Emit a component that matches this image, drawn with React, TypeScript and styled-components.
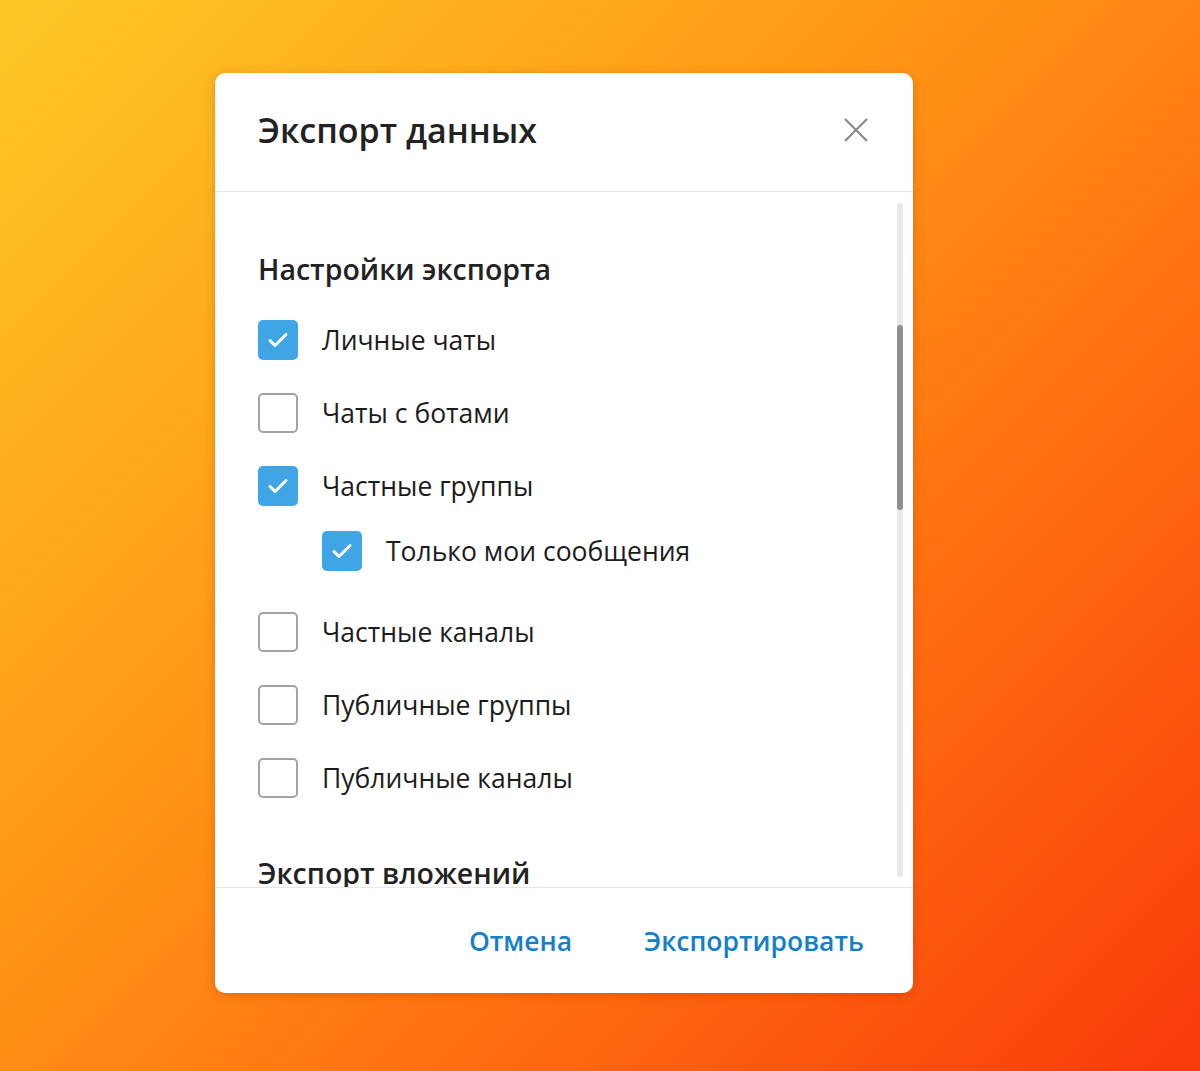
import React from "react";
import styled, { createGlobalStyle } from "styled-components";

const GlobalStyle = createGlobalStyle`
  html, body {
    margin: 0;
    padding: 0;
  }
  body {
    font-family: "Open Sans", "Noto Sans", sans-serif;
    -webkit-font-smoothing: antialiased;
  }
`;

const Page = styled.div`
  width: 1200px;
  height: 1071px;
  box-sizing: border-box;
  padding: 73px 0 0 215px;
  background: linear-gradient(135deg, #fdc826 0%, #ff9a16 38%, #ff7612 62%, #f93a0a 100%);
  overflow: hidden;
`;

const Modal = styled.div`
  width: 698px;
  height: 920px;
  background: #fff;
  border-radius: 10px;
  box-shadow: 0 2px 10px rgba(120, 40, 0, 0.25);
  display: flex;
  flex-direction: column;
  overflow: hidden;
`;

const Header = styled.header`
  height: 119px;
  flex-shrink: 0;
  display: flex;
  align-items: center;
  justify-content: space-between;
  padding: 0 44px 0 43px;
  border-bottom: 1px solid #e6e6e6;
  box-sizing: border-box;
`;

const Title = styled.h1`
  margin: 0 0 4px;
  font-size: 34px;
  font-weight: 600;
  color: #222;
`;

const CloseButton = styled.button`
  background: none;
  border: none;
  padding: 0;
  margin-bottom: 4px;
  width: 26px;
  height: 26px;
  cursor: pointer;
  display: flex;
`;

const Body = styled.div`
  position: relative;
  height: 695px;
  flex-shrink: 0;
  overflow: hidden;
`;

const Content = styled.div`
  padding: 59px 43px 0;
`;

const SectionTitle = styled.h2<{ $top?: number }>`
  margin: ${(p) => p.$top ?? 0}px 0 0;
  font-size: 28.5px;
  line-height: 36px;
  font-weight: 600;
  color: #222;
`;

const List = styled.div`
  margin-top: 33px;
  display: flex;
  flex-direction: column;
`;

const Row = styled.label<{ $indent?: boolean; $gap: number }>`
  display: flex;
  align-items: center;
  gap: 24px;
  height: 40px;
  margin-left: ${(p) => (p.$indent ? 64 : 0)}px;
  margin-bottom: ${(p) => p.$gap}px;
  font-size: 26.5px;
  color: #1c1c1c;
  cursor: pointer;
`;

const Box = styled.span<{ $checked: boolean }>`
  width: 40px;
  height: 40px;
  box-sizing: border-box;
  border-radius: 5px;
  flex-shrink: 0;
  display: flex;
  align-items: center;
  justify-content: center;
  background: ${(p) => (p.$checked ? "#40a5e4" : "#fff")};
  border: ${(p) => (p.$checked ? "none" : "2px solid #a3a3a3")};
`;

const Track = styled.div`
  position: absolute;
  right: 10px;
  top: 11px;
  bottom: 10px;
  width: 6px;
  border-radius: 3px;
  background: #e8e8e8;
`;

const Thumb = styled.div`
  position: absolute;
  left: 0;
  top: 122px;
  width: 6px;
  height: 185px;
  border-radius: 3px;
  background: #8e8e8e;
`;

const Footer = styled.footer`
  flex: 1;
  display: flex;
  align-items: center;
  justify-content: flex-end;
  gap: 72px;
  padding: 0 49px 0 0;
  border-top: 1px solid #e6e6e6;
`;

const TextButton = styled.button`
  background: none;
  border: none;
  padding: 0;
  font-family: inherit;
  font-size: 26.5px;
  font-weight: 600;
  color: #157fc7;
  cursor: pointer;
`;

const options = [
  { label: "Личные чаты", checked: true, gap: 33 },
  { label: "Чаты с ботами", checked: false, gap: 33 },
  { label: "Частные группы", checked: true, gap: 25 },
  { label: "Только мои сообщения", checked: true, indent: true, gap: 41 },
  { label: "Частные каналы", checked: false, gap: 33 },
  { label: "Публичные группы", checked: false, gap: 33 },
  { label: "Публичные каналы", checked: false, gap: 0 },
];

const Check = () => (
  <svg width="26" height="26" viewBox="0 0 26 26" fill="none">
    <path d="M5 13.5l5 5L21 7.5" stroke="#fff" strokeWidth="3" strokeLinecap="round" strokeLinejoin="round" />
  </svg>
);

const CloseIcon = () => (
  <svg width="26" height="26" viewBox="0 0 26 26" fill="none">
    <path d="M2 2l22 22M24 2L2 24" stroke="#8a8a8a" strokeWidth="2.2" />
  </svg>
);

export default function App() {
  return (
    <>
      <GlobalStyle />
      <Page>
        <Modal>
          <Header>
            <Title>Экспорт данных</Title>
            <CloseButton aria-label="Закрыть">
              <CloseIcon />
            </CloseButton>
          </Header>
          <Body>
            <Content>
              <SectionTitle>Настройки экспорта</SectionTitle>
              <List>
                {options.map((o) => (
                  <Row key={o.label} $indent={o.indent} $gap={o.gap}>
                    <Box $checked={o.checked}>{o.checked && <Check />}</Box>
                    {o.label}
                  </Row>
                ))}
              </List>
              <SectionTitle $top={57}>Экспорт вложений</SectionTitle>
            </Content>
            <Track>
              <Thumb />
            </Track>
          </Body>
          <Footer>
            <TextButton>Отмена</TextButton>
            <TextButton>Экспортировать</TextButton>
          </Footer>
        </Modal>
      </Page>
    </>
  );
}
